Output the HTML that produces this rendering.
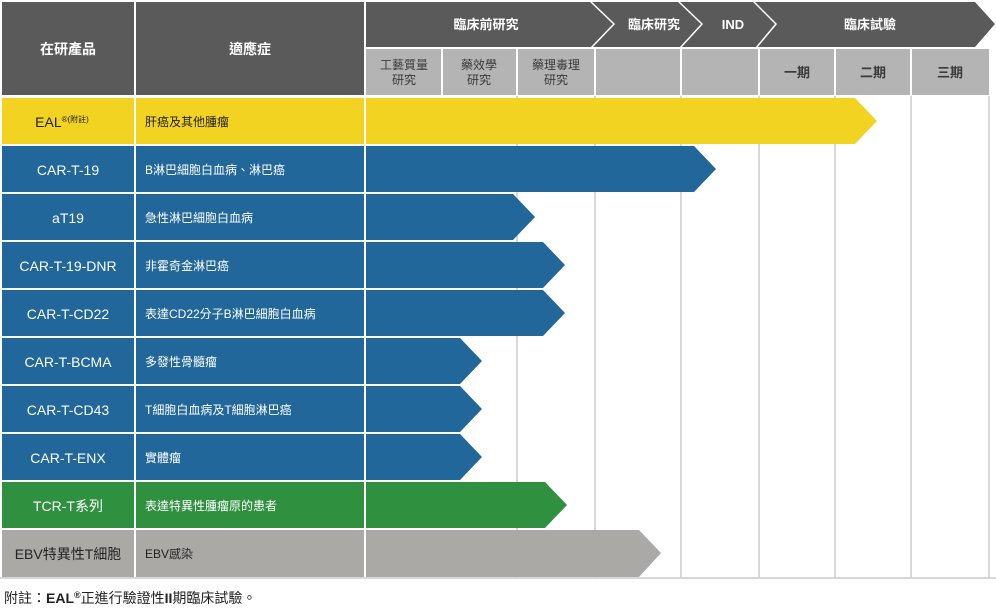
<!DOCTYPE html>
<html><head><meta charset="utf-8"><style>
html,body{margin:0;padding:0;background:#fff;width:996px;height:608px;overflow:hidden}
svg text{font-family:"Liberation Sans","Noto Sans CJK TC",sans-serif}
</style></head><body>
<svg width="996" height="608" viewBox="0 0 996 608" xmlns="http://www.w3.org/2000/svg">
<rect width="996" height="608" fill="#fff"/>
<!-- header -->
<rect x="2" y="2" width="132" height="93" fill="#5a5a5a"/>
<rect x="136" y="2" width="228" height="93" fill="#5a5a5a"/>
<text x="68" y="54" fill="#fff" font-size="14" font-weight="bold" text-anchor="middle">在研產品</text>
<text x="250" y="54" fill="#fff" font-size="14" font-weight="bold" text-anchor="middle">適應症</text>
<polygon points="366,2 975,2 995,24 975,47 366,47" fill="#5a5a5a"/>
<polyline points="590,1 614,24 591,48" fill="none" stroke="#fff" stroke-width="1.5"/>
<polyline points="678,1 702,24 680,48" fill="none" stroke="#fff" stroke-width="1.5"/>
<polyline points="753,1 776,24 756,48" fill="none" stroke="#fff" stroke-width="1.5"/>
<text x="486" y="29" fill="#fff" font-size="13" font-weight="bold" text-anchor="middle">臨床前研究</text>
<text x="654" y="29" fill="#fff" font-size="13" font-weight="bold" text-anchor="middle">臨床研究</text>
<text x="733" y="29" fill="#fff" font-size="13" font-weight="bold" text-anchor="middle">IND</text>
<text x="870" y="29" fill="#fff" font-size="13" font-weight="bold" text-anchor="middle">臨床試驗</text>
<g fill="#b4b4b4">
<rect x="366" y="49" width="75" height="46"/><rect x="443" y="49" width="73" height="46"/>
<rect x="518" y="49" width="76" height="46"/><rect x="596" y="49" width="84" height="46"/>
<rect x="682" y="49" width="76" height="46"/><rect x="760" y="49" width="74" height="46"/>
<rect x="836" y="49" width="74" height="46"/><rect x="912" y="49" width="77" height="46"/>
</g>
<g fill="#3a3a3a" font-size="12" text-anchor="middle">
<text x="404" y="69">工藝質量</text><text x="404" y="84">研究</text>
<text x="479" y="69">藥效學</text><text x="479" y="84">研究</text>
<text x="556" y="69">藥理毒理</text><text x="556" y="84">研究</text>
</g>
<g fill="#3a3a3a" font-size="13" font-weight="bold" text-anchor="middle">
<text x="797" y="77">一期</text><text x="873" y="77">二期</text><text x="950" y="77">三期</text>
</g>
<!-- grid lines -->
<g stroke="#cccccc" stroke-width="1.5">
<line x1="517" y1="96" x2="517" y2="578"/>
<line x1="595" y1="96" x2="595" y2="578"/>
<line x1="681" y1="96" x2="681" y2="578"/>
<line x1="759" y1="96" x2="759" y2="578"/>
<line x1="835" y1="96" x2="835" y2="578"/>
<line x1="911" y1="96" x2="911" y2="578"/>
<line x1="989" y1="96" x2="989" y2="578"/>
<line x1="0" y1="578" x2="996" y2="578"/>
</g>
<!-- rows -->
<g font-size="14" text-anchor="middle">
<!-- EAL -->
<rect x="2" y="98" width="132" height="46" fill="#f2d322"/><rect x="136" y="98" width="228" height="46" fill="#f2d322"/>
<polygon points="366,98 855,98 877,121 855,144 366,144" fill="#f2d322"/>
<text x="62" y="127" fill="#222">EAL<tspan font-size="8" dy="-5">®(附註)</tspan></text>
<text x="145" y="126" fill="#222" font-size="12" text-anchor="start">肝癌及其他腫瘤</text>
</g>
<g fill="#21679a">
<rect x="2" y="146" width="132" height="46"/><rect x="136" y="146" width="228" height="46"/>
<polygon points="366,146 694,146 716,169 694,192 366,192"/>
<rect x="2" y="194" width="132" height="46"/><rect x="136" y="194" width="228" height="46"/>
<polygon points="366,194 513,194 535,217 513,240 366,240"/>
<rect x="2" y="242" width="132" height="46"/><rect x="136" y="242" width="228" height="46"/>
<polygon points="366,242 543,242 565,265 543,288 366,288"/>
<rect x="2" y="290" width="132" height="46"/><rect x="136" y="290" width="228" height="46"/>
<polygon points="366,290 543,290 565,313 543,336 366,336"/>
<rect x="2" y="338" width="132" height="46"/><rect x="136" y="338" width="228" height="46"/>
<polygon points="366,338 460,338 482,361 460,384 366,384"/>
<rect x="2" y="386" width="132" height="46"/><rect x="136" y="386" width="228" height="46"/>
<polygon points="366,386 460,386 482,409 460,432 366,432"/>
<rect x="2" y="434" width="132" height="46"/><rect x="136" y="434" width="228" height="46"/>
<polygon points="366,434 460,434 482,457 460,480 366,480"/>
</g>
<g fill="#2f9140">
<rect x="2" y="482" width="132" height="46"/><rect x="136" y="482" width="228" height="46"/>
<polygon points="366,482 545,482 567,505 545,528 366,528"/>
</g>
<g fill="#aaa9a6">
<rect x="2" y="530" width="132" height="47"/><rect x="136" y="530" width="228" height="47"/>
<polygon points="366,530 639,530 661,553 639,577 366,577"/>
</g>
<g fill="#fff" font-size="14" text-anchor="middle">
<text x="68" y="175">CAR-T-19</text>
<text x="68" y="223">aT19</text>
<text x="68" y="271">CAR-T-19-DNR</text>
<text x="68" y="319">CAR-T-CD22</text>
<text x="68" y="367">CAR-T-BCMA</text>
<text x="68" y="415">CAR-T-CD43</text>
<text x="68" y="463">CAR-T-ENX</text>
<text x="68" y="511">TCR-T系列</text>
</g>
<text x="68" y="559" fill="#222" font-size="14" text-anchor="middle">EBV特異性T細胞</text>
<g fill="#fff" font-size="12">
<text x="145" y="174">B淋巴細胞白血病、淋巴癌</text>
<text x="145" y="222">急性淋巴細胞白血病</text>
<text x="145" y="270">非霍奇金淋巴癌</text>
<text x="145" y="318">表達CD22分子B淋巴細胞白血病</text>
<text x="145" y="366">多發性骨髓瘤</text>
<text x="145" y="414">T細胞白血病及T細胞淋巴癌</text>
<text x="145" y="462">實體瘤</text>
<text x="145" y="510">表達特異性腫瘤原的患者</text>
</g>
<text x="145" y="558" fill="#222" font-size="12">EBV感染</text>
<text x="4" y="603" fill="#222" font-size="14">附註：<tspan font-weight="bold">EAL</tspan><tspan font-size="9" dy="-5" font-weight="bold">®</tspan><tspan dy="5">正進行驗證性</tspan><tspan font-weight="bold">II</tspan>期臨床試驗。</text>
</svg>
</body></html>
